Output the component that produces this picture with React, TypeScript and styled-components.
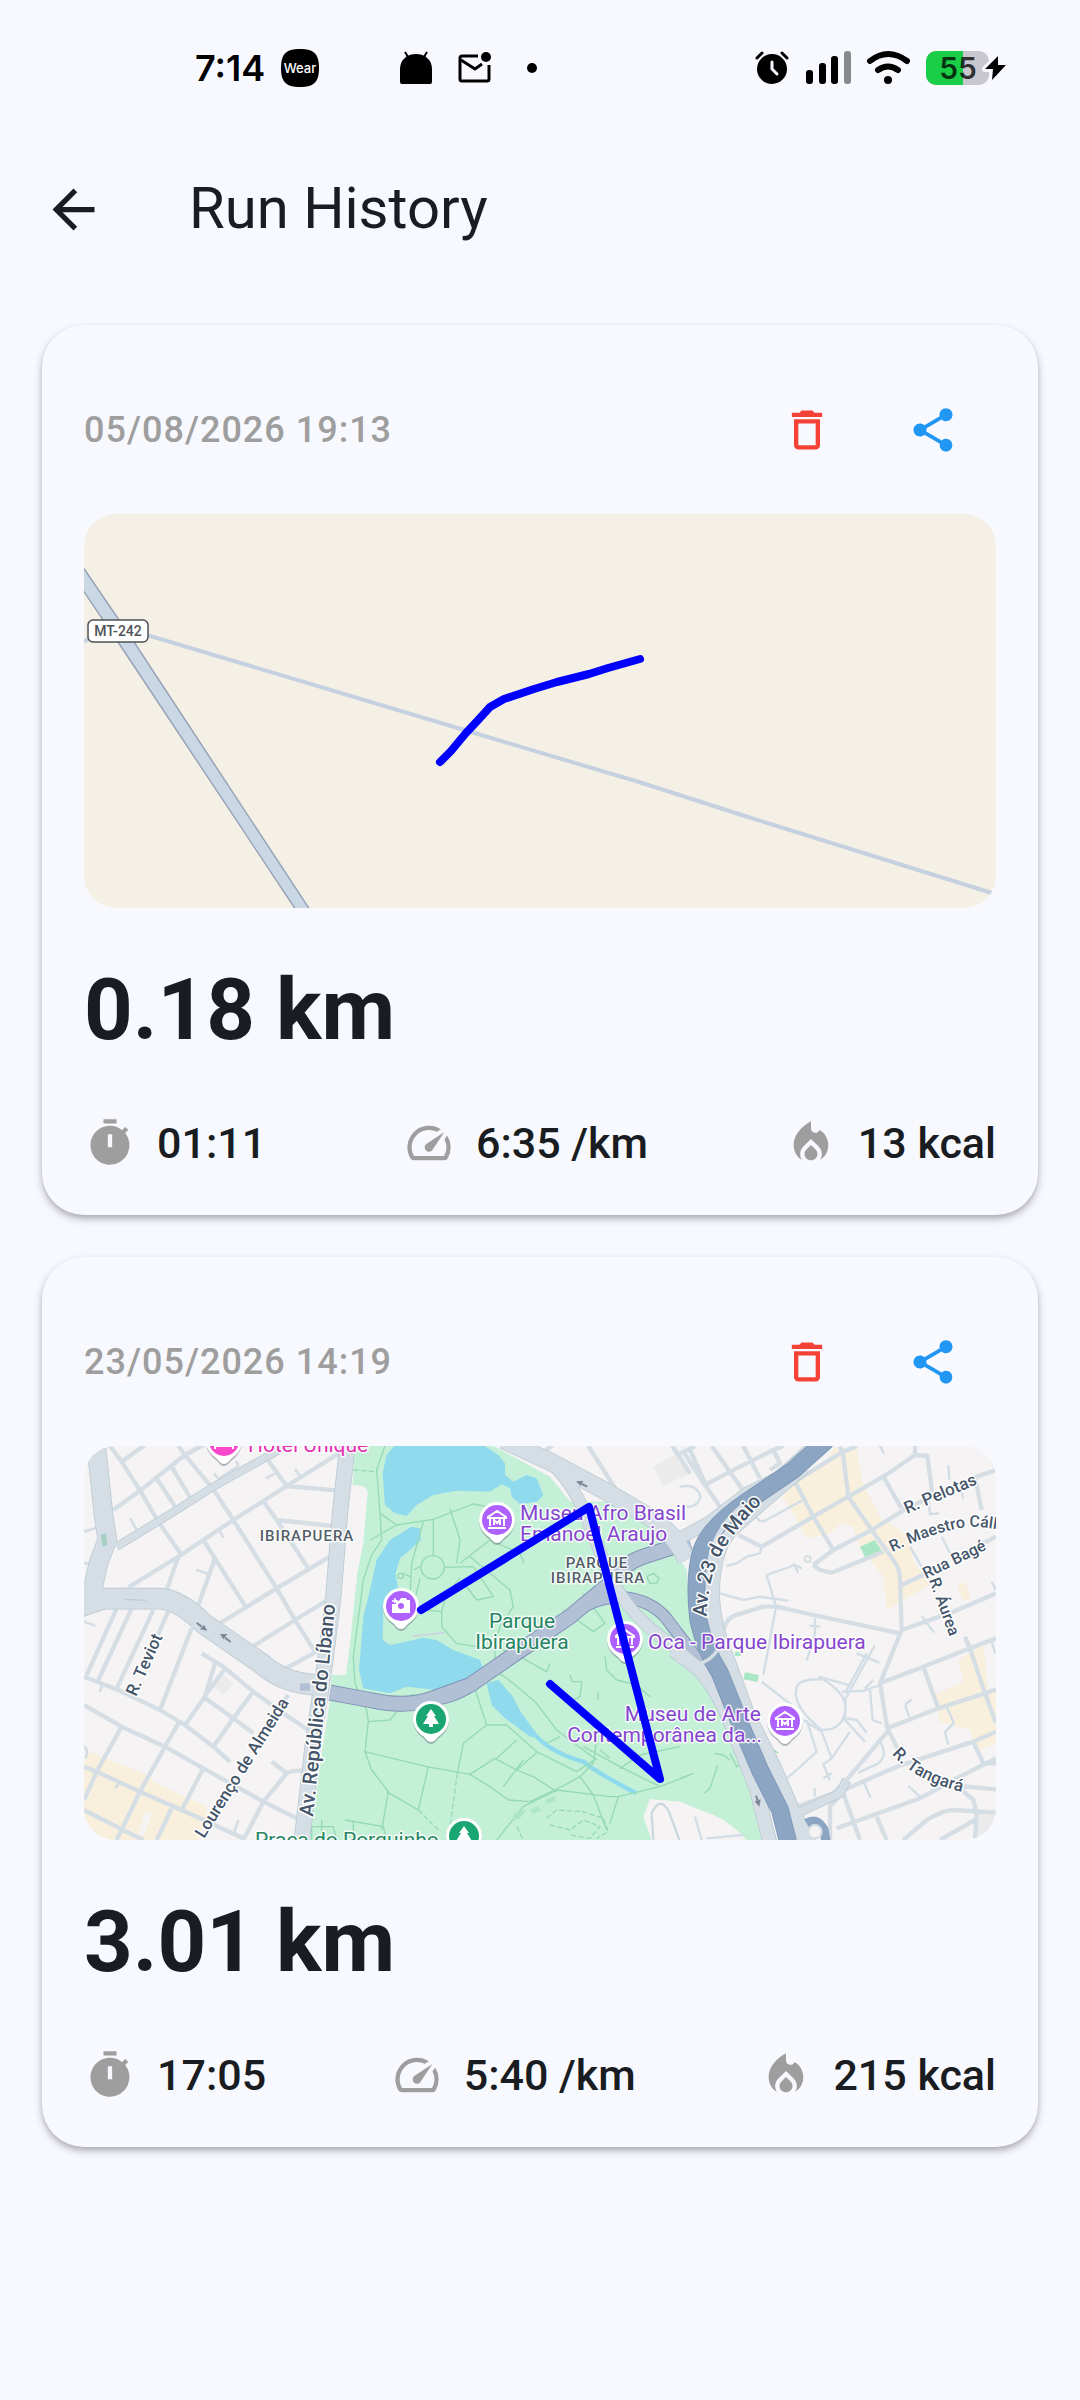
import React from 'react';
import styled, { createGlobalStyle } from 'styled-components';

const GlobalStyle = createGlobalStyle`
  * { box-sizing: border-box; }
  html, body { margin: 0; padding: 0; background: #f8f9ff; }
  body { font-family: Roboto, "Noto Sans", sans-serif; color: #191c20; }
`;

const Screen = styled.div`
  min-height: 100vh;
  background: #f8f9ff;
`;

/* ---------- status bar ---------- */

const StatusBar = styled.div`
  display: flex;
  align-items: center;
  justify-content: space-between;
  height: 136px;
  padding: 0 73px 0 195px;
  color: #000;
`;

const StatusGroup = styled.div<{ $gap: number }>`
  display: flex;
  align-items: center;
  gap: ${(p) => p.$gap}px;
`;

const Notifications = styled(StatusGroup)`
  margin-left: 65px;
`;

const Clock = styled.time`
  font-family: Inter, Roboto, sans-serif;
  font-weight: 600;
  font-size: 36px;
  line-height: 40px;
`;

const Glyph = styled.svg`
  display: block;
  flex: none;
  overflow: visible;
`;

/* ---------- app bar ---------- */

const AppBar = styled.header`
  display: flex;
  align-items: center;
  height: 147px;
  padding: 0 10px;
`;

const IconButton = styled.button<{ $color: string }>`
  display: flex;
  align-items: center;
  justify-content: center;
  width: 126px;
  height: 126px;
  padding: 0;
  border: 0;
  border-radius: 50%;
  background: none;
  color: ${(p) => p.$color};
  cursor: pointer;
`;

const Title = styled.h1`
  margin: 0 0 0 53px;
  padding-bottom: 4px;
  font-size: 58px;
  line-height: 72px;
  font-weight: 400;
`;

/* ---------- run cards ---------- */

const RunList = styled.main`
  display: flex;
  flex-direction: column;
  gap: 42px;
  padding: 42px;
`;

const Card = styled.article`
  padding: 42px;
  border-radius: 42px;
  background: #f8f9ff;
  box-shadow: 0 4px 8px rgba(0, 0, 0, 0.24), 0 3px 4px rgba(0, 0, 0, 0.1);
`;

const CardHeader = styled.div`
  display: flex;
  align-items: center;
  justify-content: space-between;
  margin-bottom: 21px;
`;

const RunDate = styled.time`
  font-size: 36px;
  line-height: 52px;
  font-weight: 500;
  letter-spacing: 1px;
  color: #9e9e9e;
`;

const Actions = styled.div`
  display: flex;
`;

const MapFrame = styled.div`
  height: 394px;
  border-radius: 32px;
  overflow: hidden;
`;

const MapDrawing = styled.svg`
  display: block;
  width: 100%;
  height: 100%;
  font-family: Roboto, sans-serif;
`;

const Distance = styled.p`
  margin: 42px 0;
  font-size: 85px;
  line-height: 121px;
  font-weight: 700;
`;

const Metrics = styled.ul`
  display: flex;
  justify-content: space-between;
  margin: 0;
  padding: 0;
  list-style: none;
`;

const Metric = styled.li`
  display: flex;
  align-items: center;
  gap: 21px;
  font-size: 43px;
  line-height: 60px;
  font-weight: 500;
`;

const MetricIcon = styled(Glyph)`
  color: #9e9e9e;
`;

/* ---------- icons ---------- */

const PATHS = {
  back: 'M20 11H7.83l5.59-5.59L12 4l-8 8 8 8 1.41-1.41L7.83 13H20v-2z',
  remove:
    'M6 19c0 1.1.9 2 2 2h8c1.1 0 2-.9 2-2V7H6v12zM8 9h8v10H8V9zm7.5-5-1-1h-5l-1 1H5v2h14V4h-3.5z',
  share:
    'M18 16.08c-.76 0-1.44.3-1.96.77L8.91 12.7c.05-.23.09-.46.09-.7s-.04-.47-.09-.7l7.05-4.11c.54.5 1.25.81 2.04.81 1.66 0 3-1.34 3-3s-1.34-3-3-3-3 1.34-3 3c0 .24.04.47.09.7L8.04 9.81C7.5 9.31 6.79 9 6 9c-1.66 0-3 1.34-3 3s1.34 3 3 3c.79 0 1.5-.31 2.04-.81l7.12 4.16c-.05.21-.08.43-.08.65 0 1.61 1.31 2.92 2.92 2.92s2.92-1.31 2.92-2.92-1.31-2.92-2.92-2.92z',
  timer:
    'M15 1H9v2h6V1zm-4 13h2V8h-2v6zm8.03-6.61 1.42-1.42c-.43-.51-.9-.99-1.41-1.41l-1.42 1.42A8.962 8.962 0 0 0 12 4c-4.97 0-9 4.03-9 9s4.02 9 9 9a8.994 8.994 0 0 0 7.03-14.61z',
  speed:
    'm20.38 8.57-1.23 1.85a8 8 0 0 1-.22 7.58H5.07A8 8 0 0 1 15.58 6.85l1.85-1.23A10 10 0 0 0 3.35 19a2 2 0 0 0 1.72 1h13.85a2 2 0 0 0 1.74-1 10 10 0 0 0-.27-10.44zm-9.79 6.84a2 2 0 0 0 2.83 0l5.66-8.49-8.49 5.66a2 2 0 0 0 0 2.83z',
  fire:
    'm12 12.9-2.13 2.09c-.56.56-.87 1.29-.87 2.07C9 18.68 10.35 20 12 20s3-1.32 3-2.94c0-.78-.31-1.52-.87-2.07L12 12.9zM16 6l-.44.55C14.38 8.02 12 7.19 12 5.3V2S4 6 4 13c0 2.92 1.56 5.47 3.89 6.86-.56-.79-.89-1.76-.89-2.8 0-1.32.52-2.56 1.47-3.5L12 10.1l3.53 3.47c.95.93 1.47 2.17 1.47 3.5 0 1.02-.31 1.96-.85 2.75 1.89-1.15 3.29-3.06 3.71-5.3.66-3.55-1.07-6.9-3.86-8.52z',
};

type IconName = keyof typeof PATHS;

const Icon = ({ name, size }: { name: IconName; size: number }) => (
  <Glyph width={size} height={size} viewBox="0 0 24 24" fill="currentColor" aria-hidden="true">
    <path d={PATHS[name]} fillRule="evenodd" />
  </Glyph>
);

const Status = () => (
  <StatusBar>
    <StatusGroup $gap={16}>
      <Clock dateTime="07:14">7:14</Clock>
      <Glyph width="38" height="38" viewBox="0 0 38 38" aria-hidden="true">
        <path d="M19 0C33 0 38 5 38 19S33 38 19 38 0 33 0 19 5 0 19 0Z" />
        <text x="19" y="24" fontSize="13" fontWeight="500" fill="#fff" textAnchor="middle" fontFamily="Inter, sans-serif">
          Wear
        </text>
      </Glyph>
      <Notifications $gap={26}>
        <Glyph width="32" height="34" viewBox="0 0 32 34" aria-hidden="true">
          <path d="M0 18C0 9 7 3 16 3s16 6 16 15v13q0 2-2 2H2q-2 0-2-2Z" />
          <path d="M5 1l3 5M27 1l-3 5" stroke="#000" strokeWidth="2" />
        </Glyph>
        <Glyph width="33" height="34" viewBox="0 0 33 34" fill="none" stroke="#000" strokeWidth="3" aria-hidden="true">
          <path d="M20 5H4Q2 5 2 7v21q0 2 2 2h25q2 0 2-2V14" />
          <path d="M3 9l14 9 7-5" />
          <circle cx="28" cy="6" r="5" fill="#000" stroke="none" />
        </Glyph>
        <Glyph width="30" height="12" viewBox="0 0 30 12" aria-hidden="true">
          <circle cx="15" cy="6" r="5" />
        </Glyph>
      </Notifications>
    </StatusGroup>
    <StatusGroup $gap={16}>
      <Glyph width="34" height="34" viewBox="0 0 34 34" fill="none" strokeLinecap="round" aria-hidden="true">
        <circle cx="17" cy="18" r="15" fill="#000" />
        <path d="M17 11v7l5 5" stroke="#f8f9ff" strokeWidth="3" />
        <path d="M2 7l5-5M32 7l-5-5" stroke="#000" strokeWidth="3" />
      </Glyph>
      <Glyph width="46" height="34" viewBox="0 0 46 34" aria-hidden="true">
        <rect x="1" y="19" width="7" height="14" rx="3" />
        <rect x="14" y="12" width="7" height="21" rx="3" />
        <rect x="26" y="5" width="7" height="28" rx="3" />
        <rect x="39" y="0" width="7" height="33" rx="3" fill="#88898d" />
      </Glyph>
      <Glyph width="43" height="34" viewBox="0 0 43 34" fill="none" stroke="#000" strokeWidth="6" strokeLinecap="round" aria-hidden="true">
        <path d="M3 10q18-14 37 0M11 19q10-7 20 0" />
        <circle cx="21" cy="29" r="4" fill="#000" stroke="none" />
      </Glyph>
      <Glyph width="81" height="34" viewBox="0 0 81 34" aria-hidden="true">
        <rect width="63" height="34" rx="10" fill="#c7c7cd" />
        <path d="M10 0h27v34H10A10 10 0 0 1 0 24V10A10 10 0 0 1 10 0Z" fill="#1bce47" />
        <text x="32" y="28" fontSize="30" fontWeight="600" fill="#000" fillOpacity="0.75" textAnchor="middle" fontFamily="Inter, sans-serif">
          55
        </text>
        <path d="M72 5L59 18h8l-1 11L80 14h-8Z" stroke="#f8f9ff" strokeWidth="6" strokeLinejoin="round" />
        <path d="M72 5L59 18h8l-1 11L80 14h-8Z" />
      </Glyph>
    </StatusGroup>
  </StatusBar>
);

/* ---------- maps ---------- */

const RuralMap = () => (
  <MapDrawing viewBox="0 0 912 394" preserveAspectRatio="xMidYMid slice" role="img" aria-label="Route near MT-242">
    <rect width="912" height="394" fill="#f5f0e5" />
    <path d="M0 128L8 122L63 121L377 215L555 268L664 303L908 379" fill="none" stroke="#c5d0e0" strokeWidth="4" />
    <path d="M-12 37L50 128L228 399H214L34 128L-12 60Z" fill="#cad8e6" stroke="#98a3b8" strokeWidth="1.5" />
    <rect x="4" y="106" width="60" height="22" rx="5" fill="#fff" stroke="#4d5156" strokeWidth="1.5" />
    <text x="34" y="122" fontSize="14" fontWeight="500" fill="#4d5156" textAnchor="middle">MT-242</text>
    <path
      d="M356 248L367 237L382 219L396 204L406 193L420 185L450 175L473 168L505 160L524 154L556 145"
      fill="none" stroke="#0000ff" strokeWidth="8" strokeLinecap="round" strokeLinejoin="round"
    />
  </MapDrawing>
);

const WEST_STREETS =
  'M130 240L210 182L345 75L400 45M155 95L225 45M118 45L155 95L210 182L265 275L335 375M325 48L345 75L430 178L490 270L620 475L675 570L735 665' +
  'M175 472L325 380L400 330L490 270L580 213L650 168L815 65M590 85L650 168L805 182M580 213L620 270L715 415M620 270L790 288' +
  'M260 145L320 237M305 110L365 210M400 330L435 385L528 532M435 385L380 540M325 380L290 480M440 585L528 532L620 475L780 380' +
  'M540 655L675 570L765 515M630 725L740 665M42 740L145 780L270 840L345 885L430 950L480 995M42 825L155 890L285 950L400 1015L580 1115L680 1165' +
  'M42 1010L80 1025L210 1085L335 1140L520 1225M42 1140L150 1195L220 1230M155 890L80 1025L42 1110M325 880L285 950L210 1085L140 1230' +
  'M400 1015L335 1140M305 1135L260 1230M365 595L270 840M140 535L50 735M185 535L85 750M250 540L140 775M295 545L225 700' +
  'M435 700L405 800L345 885M462 720L410 790M395 670L460 710L550 785L640 850L715 900M400 800L490 865L550 910M550 785L490 865L430 950' +
  'M655 795L600 870M520 1230L580 1115L650 1030Q665 1020 700 1022M605 995L650 1030';

const WEST_LANES =
  'M180 265L202 303M378 420L412 430M432 130L445 147L505 108L498 92M675 118L690 138M588 145L615 130M450 305L460 323M42 305L90 290M42 400H58M88 785L98 765M42 575L76 587M135 1075L145 1062M490 1215L505 1170M42 950Q58 960 46 985';

const NORTH_STREETS = 'M510 75L548 45M655 48L770 230M905 45L960 130';

const EAST_STREETS =
  'M10 65L75 165L120 230M30 60L78 165M95 48L150 125L195 190M190 48L240 145M0 70L45 48M75 165L150 125L280 60L310 48M280 60L300 100L270 120' +
  'M345 155L480 70L530 48M480 50L490 80L505 200L575 300L640 390Q662 420 660 450L665 600L600 760L622 895L655 960' +
  'M345 155L400 260L460 360M175 315L245 350L400 260L505 200L610 140L705 75V48M705 75L742 78L757 190' +
  'M400 405L460 360L575 300L680 235L890 140L948 120M400 405L420 420L455 428L610 365M610 140L665 235M885 140L905 240M665 465L740 430' +
  'M850 370L948 320M665 600L820 545L948 490M130 600Q140 560 175 553L250 530H290L400 555L660 610M600 760L730 710L870 655L948 625' +
  'M855 620L870 655L915 790L948 880M730 710L775 835M622 895L775 835L915 790L948 778M622 905L500 1050L460 1090L350 1130' +
  'M480 1085L650 1010L880 935L948 905M880 935L910 1000H948M470 1195L720 1105L820 1050L948 985M450 1230V1130L490 1085M490 1090L540 1230M590 1160L620 1230' +
  'M670 1230L740 1170Q790 1140 820 1140L948 1148M840 1068L948 1078M840 1075L880 1110L890 1150L885 1230M780 1230L885 1170';

const EAST_LANES =
  'M230 260Q235 278 255 272L365 212M140 408L170 400L200 380L240 370L245 350M115 435L118 490L190 510L240 500L325 512M260 435L345 405L365 415M260 435L288 530L250 735' +
  'M245 755L335 825M350 770Q360 745 430 748Q495 790 497 830Q495 900 425 900Q350 840 347 790ZM370 870L425 905L455 985M500 865L530 870L560 908' +
  'M485 785L550 783L600 765M585 645L500 800M560 670L495 790M530 670L598 698M555 775L580 750M570 780L578 870L605 880M497 800L495 870L555 935M510 905L455 985L430 1003L450 1052M430 1045L455 1030' +
  'M380 870L410 965L350 1020L320 1045M405 565V610L380 692M388 587L420 590M415 740L505 765M600 935Q625 975 595 1000L535 1028M548 1050L572 1103M685 1068L720 1100M675 825L695 808M675 825L688 860' +
  'M725 558L762 608M805 105L808 150M840 165L850 208M600 48L612 70M785 320L810 370M690 350L725 410M935 455L948 480M935 635L945 670M800 830L822 880L795 905L805 945M745 195L750 252L778 250M340 400L355 428M404 1075V1100M45 1160L65 1230M80 1225L190 1215M0 170Q50 160 62 200Q50 235 20 230';

const PARK_PATHS =
  'M45 48L20 120L30 250L80 285L190 268L310 222L380 235M80 285L0 330M30 250L35 330L5 375L-20 450L-50 680L-45 760L-10 840L-5 875L-15 965L5 1020L55 1085L35 1200' +
  'M190 268V375M160 275L125 400L120 500M222 412L310 410L350 470L370 500L320 510L275 450M240 235L270 330L260 400M270 400L360 330L450 370L462 400' +
  'M120 440L100 430M130 420L150 410M150 445L130 530M215 545V590L260 640L350 655M160 540L215 545L230 490L270 445M300 380L360 430L420 480L430 530L390 590L375 640V720L430 760L500 820L560 900L640 960L680 990' +
  'M375 650L450 680L530 725L540 700M-5 875L60 870L120 795L200 800L310 760L350 885L280 940L262 1030M350 885L410 885L500 965L620 1025L680 985M-15 965L170 1010L300 1033L375 985L440 1020L500 968' +
  'M440 1020L490 1040L560 1085M300 1033L360 1070L415 1110L480 1115L575 1070L630 1040L670 1000L680 930M440 930L380 985M460 990L400 1070M175 1010L145 1140M50 1085L145 1140' +
  'M380 1230L460 1130L560 1080L720 1100L745 1100L870 1070L960 1035M630 1040L670 1095L710 1200M745 1100L720 1180M640 950L750 1010L870 1070M750 1015L810 975L930 950M600 735L607 755L635 755L630 800L610 810' +
  'M705 680L710 720L740 750L800 765L840 800M685 785L683 810M580 540L670 605L705 580L640 490M830 440L850 430L867 445L860 460L840 460L830 440M690 960L720 985M530 940L570 920' +
  'M930 1045L970 1030M1033 970L1060 975L1080 990M1003 1090L1020 1075L1043 1005M1080 970L1100 1010L1130 990M1180 930L1215 965M1190 945L1225 970';

const PIN_COLORS = { purple: '#ae61ff', green: '#1aa673', pink: '#f948c9' };
type PinKind = 'museum' | 'camera' | 'tree' | 'hotel';

const Pin = ({ x, y, color, kind }: { x: number; y: number; color: keyof typeof PIN_COLORS; kind: PinKind }) => (
  <g transform={`translate(${x} ${y})`}>
    <path d="M0 25C-3 25-5 22-8 19C-14 15-18 8-18 1A18 18 0 0 1 18 1C18 8 14 15 8 19C5 22 3 25 0 25Z" fill="#5a6675" opacity="0.45" />
    <path d="M0 23C-3 23-5 20-8 17C-14 13-18 7-18 0A18 18 0 0 1 18 0C18 7 14 13 8 17C5 20 3 23 0 23Z" fill="#fff" />
    <circle r="15" fill={PIN_COLORS[color]} />
    {kind === 'museum' && (
      <path d="M0-9L-9-3V-2H9V-3ZM-7-2V6M7-2V6M-9 8H9M-3 5V0L0 3L3 0V5" fill="none" stroke="#fff" strokeWidth="2" />
    )}
    {kind === 'camera' && (
      <g>
        <path d="M-9-2H-5V-6L-2-5L0-8H5L6-6H9V7H-9Z" fill="#fff" />
        <circle r="3" cy="0" fill={PIN_COLORS[color]} />
        <path d="M-9-5H-4M-6-8V-3" stroke="#fff" strokeWidth="1.5" />
      </g>
    )}
    {kind === 'tree' && <path d="M0-10L5-3H3L8 5H2V8H-2V5H-8L-3-3H-5Z" fill="#fff" />}
    {kind === 'hotel' && <path d="M-9 8V-4M-9 5H9V0H-9M9 8V0" fill="none" stroke="#fff" strokeWidth="2" />}
  </g>
);

const Place = styled.text`
  font-size: 21px;
  paint-order: stroke;
  stroke: rgba(255, 255, 255, 0.85);
  stroke-width: 3px;
  stroke-linejoin: round;
`;

const District = styled(Place)`
  font-size: 15px;
  font-weight: 500;
  letter-spacing: 1px;
  fill: #545d68;
  text-anchor: middle;
`;

const Street = styled(Place)<{ $size?: number }>`
  font-size: ${(p) => p.$size ?? 17}px;
  font-weight: 500;
  fill: #46566a;
  stroke: #fff;
`;

const VIOLET = '#8645cf';
const FOREST = '#258561';

const ParkMap = () => (
  <MapDrawing viewBox="0 0 912 394" preserveAspectRatio="xMidYMid slice" role="img" aria-label="Route in Parque Ibirapuera">
    <defs>
      <path id="avenue-23" d="M623 171Q623 128 644 97Q655 80 680 54" />
      <path id="maestro" d="M808 106Q850 86 882 81Q898 79 960 92" />
      <path id="tangara" d="M808 308Q835 340 895 349" />
    </defs>
    <rect width="912" height="394" fill="#f5f3f3" />

    <g transform="translate(-14 -16) scale(0.33333)" strokeLinejoin="round">
      <g fill="#f8f0dc">
        <path d="M60 965L245 1040V1052L410 1130V1165L385 1232H42V1000Z" />
        <g transform="translate(1830 0)">
          <path d="M345 150L440 95L460 55L530 55L545 150L570 200L605 270L655 295L690 330L700 390L750 465L620 540L610 440L540 350L520 290L480 280L450 310L380 325L310 200Z" />
          <path d="M835 690L910 645L925 780L948 770V940L890 965L870 900L780 875L765 795L850 755ZM832 465L855 455L872 505L850 515Z" />
        </g>
      </g>
      <path d="M225 1145L245 1150L222 1215H205Z" fill="#f5f3f3" />
      <path d="M460 735L492 760L460 795L430 770ZM1750 110L1830 65L1860 130L1780 168Z M2720 1145L2780 1150V1230H2715Z" fill="#ebebeb" />

      <path
        d="M855 45L848 165L875 168Q893 172 893 190L880 340L862 430L840 640L828 735H785L780 810L715 1232H1745L1720 1160L1740 1107L1830 1115L1930 1155Q1990 1180 2030 1232H2080L2060 1120L2000 960L1960 850L1900 690L1860 560L1850 420L1800 340L1700 245L1620 215H1500L1440 140L1265 45Z"
        fill="#c3f0d6"
      />
      <g transform="translate(1830 0)" fill="#a9e6c5">
        <path d="M540 350L585 330L605 362L555 382ZM195 727L237 735L232 756L190 748ZM165 665H183V678H165Z" />
      </g>
      <g transform="translate(900 0)">
        <g fill="#90daee">
          <path d="M75 45H340L385 75L405 100V135L430 155L470 135L500 145L520 195L500 215L450 222L425 200L420 175L395 163L360 185L260 182L190 195L140 225L110 258L75 250L45 225L38 130L50 75Z" />
          <path d="M125 290L150 295L153 330L120 360L90 385L77 430L85 480L60 500L40 540L38 630L60 645L160 623L200 630L250 660L330 690L345 730L320 745L200 780L110 770L60 790L-20 775L-33 720L-20 560L0 480L20 390L60 330Z" />
          <path d="M350 760L385 750L425 795L455 850L510 925L480 920L400 860L365 825Z" />
          <path d="M500 920Q550 970 640 995Q700 1040 800 1090" fill="none" stroke="#90daee" strokeWidth="13" />
        </g>
        <g fill="none" stroke="#96d9b6" strokeWidth="4">
          <path d={PARK_PATHS} />
          <circle cx="188" cy="412" r="35" />
          <circle cx="92" cy="438" r="8" />
          <path
            d="M262 1030L240 1190M145 1140L210 1205M-50 120L20 125M530 1165L560 1140L640 1145L700 1165L715 1205L680 1225M540 1185L600 1200L640 1170L690 1190L660 1225L600 1215M440 1190L460 1230"
            strokeDasharray="16 7"
          />
          <path d="M-175 1230V1190H-110L-100 1230M-145 1170V1210M-75 1170L40 1190L50 1230M-50 1175V1205" />
        </g>
        <path d="M430 1150L470 1140L450 1165L430 1170ZM525 1110L555 1098V1112L530 1122ZM480 1140L505 1128L515 1140L490 1152Z" fill="#afe6c8" />
        <path d="M128 618L225 608" stroke="#ccd8df" strokeWidth="6" />
        <path d="M850 1230L845 1150Q870 1095 897 1145L928 1230" fill="none" stroke="#ccd8e0" strokeWidth="7" />
      </g>

      <g fill="none" stroke="#d5dee4" strokeWidth="13">
        <path d={WEST_STREETS} />
        <path d={WEST_LANES} strokeWidth="8" />
        <path d={NORTH_STREETS} transform="translate(900 0)" />
        <g transform="translate(1830 0)">
          <path d={EAST_STREETS} />
          <path d={EAST_LANES} strokeWidth="7" stroke="#d2dde6" />
          <circle cx="383" cy="387" r="9" strokeWidth="6" />
        </g>
      </g>

      {/* avenues: casing first, surface above */}
      {[
        { color: '#bccbd4', grow: 5 },
        { color: '#d6dee5', grow: 0 },
      ].map(({ color, grow }) => (
        <g key={color} fill="none" stroke={color}>
          <path d="M78 40L100 250L112 330L85 400L55 540" strokeWidth={54 + grow} />
          <path d="M30 530L100 506H270Q330 510 400 580L580 705Q640 760 745 765" strokeWidth={60 + grow} />
          <path d="M140 350L320 240L430 170L600 75L660 40" strokeWidth={20 + grow} />
          <path d="M833 40L810 250L790 500L765 700L730 930L695 1235" strokeWidth={44 + grow} />
        </g>
      ))}

      {[
        { color: '#8092b8', grow: 6 },
        { color: '#b2c0d6', grow: 0 },
      ].map(({ color, grow }) => (
        <g key={color} fill="none" stroke={color} transform="translate(900 0)">
          <path d="M-120 788L0 810Q110 835 190 805L300 765L460 655L600 560L720 460Q760 400 820 380L960 335" strokeWidth={42 + grow} />
          <path d="M600 560Q680 490 780 505Q860 520 900 580L1000 710" strokeWidth={32 + grow} />
          <path d="M180 815Q260 810 330 755" strokeWidth={22 + grow} />
        </g>
      ))}
      <rect x="690" y="760" width="30" height="22" fill="#b2c0d6" />

      {[
        { color: '#bccbd4', grow: 5 },
        { color: '#d6dee5', grow: 0 },
      ].map(({ color, grow }) => (
        <g key={color} fill="none" stroke={color}>
          <path d="M1300 30L1440 95L1600 180L1720 250Q1810 300 1850 390" strokeWidth={50 + grow} />
          <path d="M1440 95Q1520 170 1560 290L1620 440Q1680 560 1800 640L1890 720" strokeWidth={34 + grow} />
          <path d="M1700 245L1830 325L1920 275L2030 190L2130 140L2250 30" strokeWidth={34 + grow} />
          <path d="M2200 110L2070 220L1980 300Q1925 360 1925 500Q1930 600 1975 700L2030 850L2110 1010L2170 1150L2215 1240" strokeWidth={44 + grow} />
          <path d="M1810 660L1890 720Q1950 790 1990 900L2060 1080L2100 1240" strokeWidth={40 + grow} />
          <path d="M2180 1150L2310 1090L2330 1050" strokeWidth={24 + grow} />
        </g>
      ))}
      <g transform="translate(1830 0)" fill="none">
        <path d="M440 30L340 120L200 215Q90 290 65 360Q40 440 55 570Q75 660 120 730L180 880L240 1020L300 1140L325 1240" stroke="#7f9abb" strokeWidth="54" />
        <path d="M440 30L340 120L200 215Q90 290 65 360Q40 440 55 570Q75 660 120 730L180 880L240 1020L300 1140L325 1240" stroke="#8ca5c2" strokeWidth="48" />
        <path d="M190 225Q100 300 88 400L86 560" stroke="#d6dee5" strokeWidth="14" />
        <path d="M380 1180Q410 1160 432 1200L438 1235" stroke="#8ca5c2" strokeWidth="28" />
        <circle cx="405" cy="1205" r="20" fill="#f5f3f3" stroke="#d6dee5" strokeWidth="6" />
        <path d="M-10 690Q70 730 120 650" stroke="#d6dee5" strokeWidth="10" />
      </g>

      <g stroke="#7d8796" strokeWidth="6" fill="#7d8796">
        <path d="M380 578L395 590M482 636L465 623M1552 170L1535 162M2058 1097L2063 1112" />
        <path d="M412 602L390 598L402 584ZM450 612L472 612L460 628ZM1518 154L1540 152L1532 168ZM2068 1130L2054 1114L2072 1108Z" stroke="none" />
      </g>
      <path d="M92 315L108 310L112 345L98 350Z" fill="#a7cfc4" />
      <path d="M165 508L228 511" stroke="#bccbd4" strokeWidth="4" />
    </g>

    <Pin x={140} y={-5} color="pink" kind="hotel" />
    <Pin x={413} y={74} color="purple" kind="museum" />
    <Pin x={317} y={160} color="purple" kind="camera" />
    <Pin x={541} y={193} color="purple" kind="museum" />
    <Pin x={347} y={273} color="green" kind="tree" />
    <Pin x={380} y={390} color="green" kind="tree" />
    <Pin x={701} y={275} color="purple" kind="museum" />

    <Place x="164" y="6" fill="#e52fb0">Hotel Unique</Place>
    <Place x="171" y="401" fill={FOREST}>Praça do Porquinho</Place>
    <Place x="436" y="74" fill={VIOLET}>Museu Afro Brasil</Place>
    <Place x="436" y="95" fill={VIOLET}>Emanoel Araujo</Place>
    <Place x="438" y="182" fill={FOREST} textAnchor="middle">Parque</Place>
    <Place x="438" y="203" fill={FOREST} textAnchor="middle">Ibirapuera</Place>
    <Place x="564" y="203" fill={VIOLET}>Oca - Parque Ibirapuera</Place>
    <Place x="677" y="275" fill={VIOLET} textAnchor="end">Museu de Arte</Place>
    <Place x="678" y="296" fill={VIOLET} textAnchor="end">Contemporânea da...</Place>
    <District x="223" y="95">IBIRAPUERA</District>
    <District x="513" y="122">PARQUE</District>
    <District x="514" y="137">IBIRAPUERA</District>

    <Street transform="translate(52 251) rotate(-66)">R. Teviot</Street>
    <Street transform="translate(120 393) rotate(-58)">Lourenço de Almeida</Street>
    <Street $size={20} transform="translate(229 371) rotate(-84)">Av. República do Líbano</Street>
    <Street transform="translate(823 68) rotate(-23)">R. Pelotas</Street>
    <Street $size={16} transform="translate(842 133) rotate(-26)">Rua Bagé</Street>
    <Street $size={16} transform="translate(845 134) rotate(70)">R. Áurea</Street>
    <Street $size={20}><textPath href="#avenue-23">Av. 23 de Maio</textPath></Street>
    <Street $size={16}><textPath href="#maestro">R. Maestro Cálli</textPath></Street>
    <Street><textPath href="#tangara">R. Tangará</textPath></Street>

    <path
      d="M337 164L505 61L576 333L466 238"
      fill="none" stroke="#0000ff" strokeWidth="8" strokeLinecap="round" strokeLinejoin="round"
    />
  </MapDrawing>
);

/* ---------- page ---------- */

interface Run {
  date: string;
  distance: string;
  time: string;
  pace: string;
  energy: string;
  Map: React.ComponentType;
}

const RUNS: Run[] = [
  { date: '05/08/2026 19:13', distance: '0.18 km', time: '01:11', pace: '6:35 /km', energy: '13 kcal', Map: RuralMap },
  { date: '23/05/2026 14:19', distance: '3.01 km', time: '17:05', pace: '5:40 /km', energy: '215 kcal', Map: ParkMap },
];

const Stat = ({ icon, children }: { icon: IconName; children: React.ReactNode }) => (
  <Metric>
    <MetricIcon width="52" height="52" viewBox="0 0 24 24" fill="currentColor" aria-hidden="true">
      <path d={PATHS[icon]} fillRule="evenodd" />
    </MetricIcon>
    {children}
  </Metric>
);

const RunCard = ({ date, distance, time, pace, energy, Map }: Run) => (
  <Card>
    <CardHeader>
      <RunDate>{date}</RunDate>
      <Actions>
        <IconButton type="button" aria-label="Delete run" $color="#f44336">
          <Icon name="remove" size={52} />
        </IconButton>
        <IconButton type="button" aria-label="Share run" $color="#2196f3">
          <Icon name="share" size={52} />
        </IconButton>
      </Actions>
    </CardHeader>
    <MapFrame>
      <Map />
    </MapFrame>
    <Distance>{distance}</Distance>
    <Metrics>
      <Stat icon="timer">{time}</Stat>
      <Stat icon="speed">{pace}</Stat>
      <Stat icon="fire">{energy}</Stat>
    </Metrics>
  </Card>
);

export default function App() {
  return (
    <Screen>
      <GlobalStyle />
      <Status />
      <AppBar>
        <IconButton type="button" aria-label="Back" $color="#191c20">
          <Icon name="back" size={63} />
        </IconButton>
        <Title>Run History</Title>
      </AppBar>
      <RunList>
        {RUNS.map((run) => (
          <RunCard key={run.date} {...run} />
        ))}
      </RunList>
    </Screen>
  );
}
